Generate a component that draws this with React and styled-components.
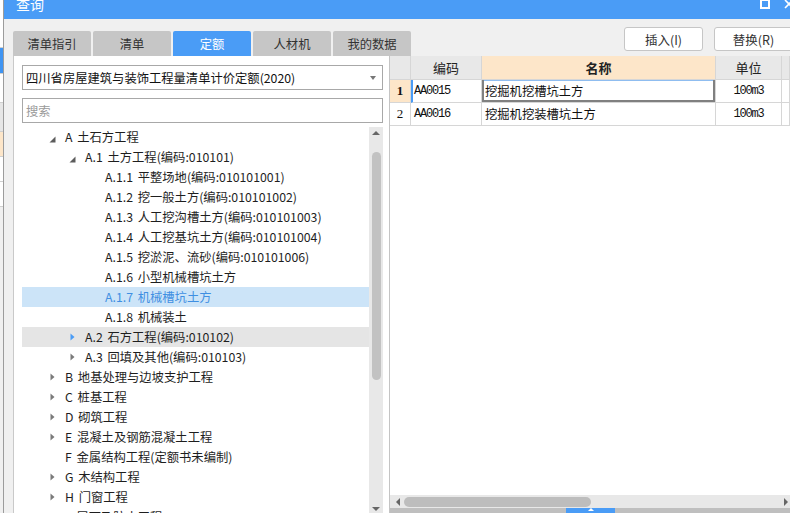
import React from 'react';
import styled, { createGlobalStyle } from 'styled-components';

const BLUE = '#4a9cf6';
const PEACH = '#fde6c9';

const tabs = ['清单指引', '清单', '定额', '人材机', '我的数据'];

const tree = [
  { level: 0, arrow: 'open', text: 'A 土石方工程' },
  { level: 1, arrow: 'open', text: 'A.1 土方工程(编码:010101)' },
  { level: 2, text: 'A.1.1 平整场地(编码:010101001)' },
  { level: 2, text: 'A.1.2 挖一般土方(编码:010101002)' },
  { level: 2, text: 'A.1.3 人工挖沟槽土方(编码:010101003)' },
  { level: 2, text: 'A.1.4 人工挖基坑土方(编码:010101004)' },
  { level: 2, text: 'A.1.5 挖淤泥、流砂(编码:010101006)' },
  { level: 2, text: 'A.1.6 小型机械槽坑土方' },
  { level: 2, text: 'A.1.7 机械槽坑土方', selected: true },
  { level: 2, text: 'A.1.8 机械装土' },
  { level: 1, arrow: 'closed', text: 'A.2 石方工程(编码:010102)', hover: true },
  { level: 1, arrow: 'closed', text: 'A.3 回填及其他(编码:010103)' },
  { level: 0, arrow: 'closed', text: 'B 地基处理与边坡支护工程' },
  { level: 0, arrow: 'closed', text: 'C 桩基工程' },
  { level: 0, arrow: 'closed', text: 'D 砌筑工程' },
  { level: 0, arrow: 'closed', text: 'E 混凝土及钢筋混凝土工程' },
  { level: 0, text: 'F 金属结构工程(定额书未编制)' },
  { level: 0, arrow: 'closed', text: 'G 木结构工程' },
  { level: 0, arrow: 'closed', text: 'H 门窗工程' },
  { level: 0, arrow: 'closed', text: 'J 屋面及防水工程' },
];

const columns = [
  { key: 'no', title: '', width: 21 },
  { key: 'code', title: '编码', width: 71 },
  { key: 'name', title: '名称', width: 234, active: true },
  { key: 'unit', title: '单位', width: 66 },
  { key: 'rest', title: '', width: 0 },
];

const rows = [
  { no: '1', code: 'AA0015', name: '挖掘机挖槽坑土方', unit: '100m3', current: true },
  { no: '2', code: 'AA0016', name: '挖掘机挖装槽坑土方', unit: '100m3' },
];

const strip = [
  { h: 47, c: '#ffffff' },
  { h: 25, c: '#3f94f2' },
  { h: 28, c: '#ffffff' },
  { h: 28, c: '#e6e6e6' },
  { h: 24, c: PEACH },
  { h: 24, c: '#ffffff' },
  { h: 24, c: '#ffffff' },
  { h: 313, c: '#f0f0f0' },
];

const GlobalStyle = createGlobalStyle`
  html, body { margin: 0; padding: 0; }
  body {
    font-family: "Noto Sans CJK SC", "Microsoft YaHei", sans-serif;
    background: #f0f0f0;
  }
`;

const Page = styled.div`
  display: flex;
  width: 790px;
  height: 513px;
  overflow: hidden;
  background: #f0f0f0;
`;

const BgStrip = styled.div`
  width: 3px;
  flex: none;
  display: flex;
  flex-direction: column;
  border-right: 1px solid #9c9c9c;
`;

const StripBlock = styled.div`
  flex: none;
  height: ${p => p.h}px;
  background: ${p => p.c};
  border-bottom: 1px solid #cfcfcf;
`;

const Dialog = styled.div`
  flex: 1;
  min-width: 0;
  height: 525px;
  margin-top: -12px;
  display: flex;
  flex-direction: column;
`;

const TitleBar = styled.div`
  flex: none;
  height: 31px;
  background: ${BLUE};
  color: #fff;
  display: flex;
  align-items: center;
  padding-left: 12px;
  font-size: 14px;
  line-height: 1;
`;

const TitleControls = styled.div`
  margin-left: auto;
  display: flex;
  align-items: center;
  gap: 14px;
  margin-right: -4px;
`;

const Body = styled.div`
  flex: 1;
  min-height: 0;
  display: flex;
  padding: 8px 0 0 9px;
`;

const LeftPane = styled.div`
  width: 376px;
  flex: none;
  display: flex;
  flex-direction: column;
  padding-top: 4px;
`;

const TabRow = styled.div`
  display: flex;
  gap: 2px;
  height: 25px;
  flex: none;
`;

const Tab = styled.div`
  width: 78px;
  flex: none;
  display: flex;
  align-items: center;
  justify-content: center;
  border-radius: 2px 2px 0 0;
  background: ${p => (p.$active ? BLUE : '#c6c6c6')};
  color: ${p => (p.$active ? '#fff' : '#333')};
  font-size: 12.3px;
`;

const Panel = styled.div`
  flex: 1;
  min-height: 0;
  background: #fff;
  border-left: 1px solid #c9c9c9;
  padding: 9px 6px 0 8px;
  display: flex;
  flex-direction: column;
`;

const Select = styled.div`
  height: 25px;
  box-sizing: border-box;
  border: 1px solid #a8a8a8;
  display: flex;
  align-items: center;
  padding: 0 6px 0 3px;
  font-size: 12.3px;
  color: #111;
  flex: none;
`;

const Caret = styled.span`
  margin-left: auto;
  width: 0;
  height: 0;
  border-left: 3.5px solid transparent;
  border-right: 3.5px solid transparent;
  border-top: 4px solid #777;
`;

const Search = styled.div`
  margin-top: 8px;
  height: 25px;
  box-sizing: border-box;
  border: 1px solid #a8a8a8;
  display: flex;
  align-items: center;
  padding-left: 3px;
  font-size: 12.3px;
  color: #9a9a9a;
  flex: none;
`;

const TreeWrap = styled.div`
  margin-top: 4px;
  flex: 1;
  min-height: 0;
  display: flex;
  overflow: hidden;
`;

const TreeList = styled.div`
  flex: 1;
  min-width: 0;
  overflow: hidden;
`;

const TreeRow = styled.div`
  height: 20px;
  display: flex;
  align-items: center;
  padding-left: ${p => 23 + p.$level * 20}px;
  background: ${p => (p.$selected ? '#cce4f8' : p.$hover ? '#e5e5e5' : 'transparent')};
  color: ${p => (p.$selected ? '#3f8fe2' : '#1e1e1e')};
  font-size: 12.3px;
  word-spacing: 2px;
  white-space: nowrap;
`;

const ArrowBox = styled.span`
  width: 14px;
  height: 20px;
  flex: none;
  margin-right: 6px;
  display: flex;
  align-items: center;
  justify-content: center;
`;

const VScroll = styled.div`
  width: 14px;
  flex: none;
  background: #e8e8e8;
  display: flex;
  flex-direction: column;
  align-items: center;
`;

const ArrowUp = styled.span`
  margin-top: 4px;
  width: 0;
  height: 0;
  border-left: 4px solid transparent;
  border-right: 4px solid transparent;
  border-bottom: 4px solid #666;
`;

const ArrowDown = styled.span`
  margin-top: auto;
  margin-bottom: 2px;
  width: 0;
  height: 0;
  border-left: 4px solid transparent;
  border-right: 4px solid transparent;
  border-top: 4px solid #666;
`;

const VThumb = styled.div`
  margin-top: 17px;
  width: 9px;
  height: 228px;
  border-radius: 5px;
  background: #c2c2c2;
`;

const RightPane = styled.div`
  flex: 1;
  min-width: 0;
  display: flex;
  flex-direction: column;
`;

const ButtonRow = styled.div`
  height: 24px;
  flex: none;
  display: flex;
  justify-content: flex-end;
  gap: 11px;
  margin-right: -3px;
  margin-bottom: 5px;
`;

const Button = styled.div`
  width: 79px;
  height: 24px;
  box-sizing: border-box;
  background: #fff;
  border: 1px solid #c6c6c6;
  border-radius: 3px;
  display: flex;
  align-items: center;
  justify-content: center;
  font-size: 12.5px;
  color: #333;
`;

const TableArea = styled.div`
  flex: 1;
  min-height: 0;
  display: flex;
  flex-direction: column;
  background: #fff;
  border-left: 1px solid #c4c4c4;
`;

const Grid = styled.div`
  flex: 1;
  min-height: 0;
  overflow: hidden;
`;

const GridRow = styled.div`
  display: flex;
  height: ${p => (p.$header ? 24 : 23)}px;
`;

const Cell = styled.div`
  box-sizing: border-box;
  flex: ${p => (p.$w ? `0 0 ${p.$w}px` : '1')};
  border-right: 1px solid #d6d6d6;
  border-bottom: 1px solid #d6d6d6;
  display: flex;
  align-items: center;
  justify-content: ${p => p.$align || 'flex-start'};
  padding-left: ${p => (p.$align === 'center' ? 0 : 3)}px;
  background: ${p => p.$bg || '#fff'};
  color: #111;
  font-size: 12.3px;
  white-space: nowrap;
  overflow: hidden;
`;

const HeadCell = styled(Cell)`
  background: ${p => (p.$active ? PEACH : '#e8e8e8')};
  font-size: 13px;
  font-weight: ${p => (p.$active ? 700 : 400)};
  color: #222;
  padding-left: 0;
`;

const CodeCell = styled(Cell)`
  font-family: "Liberation Mono", monospace;
  font-size: 12px;
  letter-spacing: -1.2px;
  border-left: ${p => (p.$current ? `2px solid ${BLUE}` : 'none')};
  padding-left: ${p => (p.$current ? 1 : 3)}px;
`;

const NameCell = styled(Cell)`
  box-shadow: ${p =>
    p.$selected
      ? 'inset 2px 0 #808080, inset -2px 0 #808080, inset 0 -2px #808080, inset 0 1px #8fbdf0'
      : 'none'};
`;

const UnitCell = styled(Cell)`
  font-family: "Liberation Mono", monospace;
  font-size: 12px;
  letter-spacing: -1.2px;
`;

const NoCell = styled(Cell)`
  font-family: "Liberation Serif", serif;
  font-size: 13px;
  font-weight: ${p => (p.$current ? 700 : 400)};
  background: ${p => (p.$current ? PEACH : '#fff')};
`;

const HScroll = styled.div`
  height: 13px;
  flex: none;
  background: #e8e8e8;
  display: flex;
  align-items: center;
  padding: 0 2px 0 6px;
`;

const ArrowLeft = styled.span`
  width: 0;
  height: 0;
  border-top: 4px solid transparent;
  border-bottom: 4px solid transparent;
  border-right: 4px solid #666;
`;

const ArrowRight = styled.span`
  margin-left: auto;
  width: 0;
  height: 0;
  border-top: 4px solid transparent;
  border-bottom: 4px solid transparent;
  border-left: 4px solid #666;
`;

const HThumb = styled.div`
  margin-left: 4px;
  width: 187px;
  height: 10px;
  border-radius: 5px;
  background: #bdbdbd;
`;

const BottomBar = styled.div`
  height: 5px;
  flex: none;
  background: #bfbfbf;
  display: flex;
`;

const BlueSeg = styled.div`
  margin-left: 176px;
  width: 49px;
  background: ${BLUE};
  display: flex;
  justify-content: center;
`;

const Notch = styled.span`
  width: 0;
  height: 0;
  border-left: 3px solid transparent;
  border-right: 3px solid transparent;
  border-bottom: 3px solid #fff;
`;

function TreeArrow({ type, hover }) {
  if (type === 'open') {
    return (
      <svg width="7" height="7" viewBox="0 0 7 7" style={{ marginTop: 5 }}>
        <polygon points="6.5,0.5 6.5,6.5 0.5,6.5" fill="#5c5c5c" />
      </svg>
    );
  }
  if (type === 'closed') {
    return (
      <svg width="5" height="8" viewBox="0 0 5 8">
        <polygon points="0.5,0.5 4.5,4 0.5,7.5" fill={hover ? BLUE : '#7a7a7a'} />
      </svg>
    );
  }
  return null;
}

export default function App() {
  return (
    <>
      <GlobalStyle />
      <Page>
        <BgStrip>
          {strip.map((b, i) => (
            <StripBlock key={i} h={b.h} c={b.c} />
          ))}
        </BgStrip>
        <Dialog>
          <TitleBar>
            查询
            <TitleControls>
              <svg width="10" height="10" viewBox="0 0 10 10">
                <rect x="1" y="1" width="8" height="8" fill="none" stroke="#fff" strokeWidth="2" />
              </svg>
              <svg width="10" height="10" viewBox="0 0 10 10">
                <path d="M1 1 L9 9 M9 1 L1 9" stroke="#fff" strokeWidth="1.6" />
              </svg>
            </TitleControls>
          </TitleBar>
          <Body>
            <LeftPane>
              <TabRow>
                {tabs.map(t => (
                  <Tab key={t} $active={t === '定额'}>{t}</Tab>
                ))}
              </TabRow>
              <Panel>
                <Select>
                  四川省房屋建筑与装饰工程量清单计价定额(2020)
                  <Caret />
                </Select>
                <Search>搜索</Search>
                <TreeWrap>
                  <TreeList>
                    {tree.map((n, i) => (
                      <TreeRow key={i} $level={n.level} $selected={n.selected} $hover={n.hover}>
                        <ArrowBox>
                          <TreeArrow type={n.arrow} hover={n.hover} />
                        </ArrowBox>
                        {n.text}
                      </TreeRow>
                    ))}
                  </TreeList>
                  <VScroll>
                    <ArrowUp />
                    <VThumb />
                    <ArrowDown />
                  </VScroll>
                </TreeWrap>
              </Panel>
            </LeftPane>
            <RightPane>
              <ButtonRow>
                <Button>插入(I)</Button>
                <Button>替换(R)</Button>
              </ButtonRow>
              <TableArea>
                <Grid>
                  <GridRow $header>
                    {columns.map(c => (
                      <HeadCell key={c.key} $w={c.width} $align="center" $active={c.active}>
                        {c.title}
                      </HeadCell>
                    ))}
                  </GridRow>
                  {rows.map(r => (
                    <GridRow key={r.no}>
                      <NoCell $w={21} $align="center" $current={r.current}>{r.no}</NoCell>
                      <CodeCell $w={71} $current={r.current}>{r.code}</CodeCell>
                      <NameCell $w={234} $selected={r.current}>{r.name}</NameCell>
                      <UnitCell $w={66} $align="center">{r.unit}</UnitCell>
                      <Cell />
                    </GridRow>
                  ))}
                </Grid>
                <HScroll>
                  <ArrowLeft />
                  <HThumb />
                  <ArrowRight />
                </HScroll>
                <BottomBar>
                  <BlueSeg>
                    <Notch />
                  </BlueSeg>
                </BottomBar>
              </TableArea>
            </RightPane>
          </Body>
        </Dialog>
      </Page>
    </>
  );
}
